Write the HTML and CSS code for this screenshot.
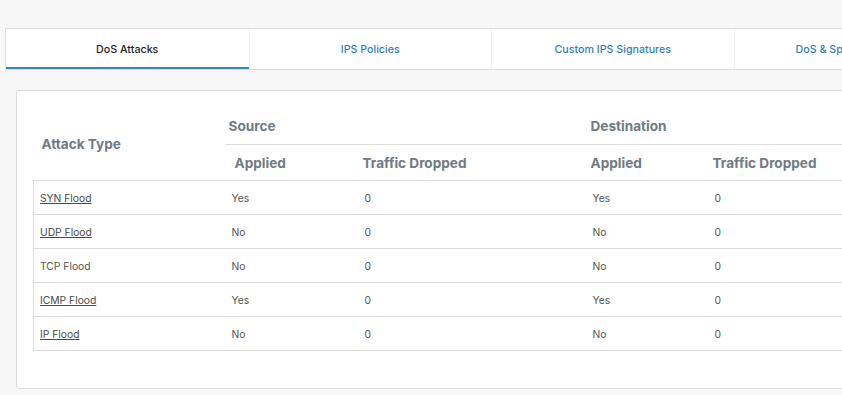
FILE: index.html
```html
<!DOCTYPE html>
<html>
<head>
<meta charset="utf-8">
<link rel="stylesheet" href="styles.css">
</head>
<body>
<div class="page">
  <nav class="tabs">
    <a class="tab active">DoS Attacks</a>
    <a class="tab">IPS Policies</a>
    <a class="tab">Custom IPS Signatures</a>
    <a class="tab">DoS &amp; Spoof Protection</a>
  </nav>
  <section class="card">
    <table class="grid">
      <colgroup>
        <col class="c1"><col class="c2"><col class="c3"><col class="c4"><col class="c5">
      </colgroup>
      <thead>
        <tr class="h1">
          <th rowspan="2" class="type">Attack Type</th>
          <th colspan="2" class="grp src">Source</th>
          <th colspan="2" class="grp dst">Destination</th>
        </tr>
        <tr class="h2">
          <th class="s-app">Applied</th>
          <th class="s-drop">Traffic Dropped</th>
          <th class="d-app">Applied</th>
          <th class="d-drop">Traffic Dropped</th>
        </tr>
      </thead>
      <tbody>
        <tr><td><a class="lnk">SYN Flood</a></td><td>Yes</td><td class="num">0</td><td class="dv">Yes</td><td class="num">0</td></tr>
        <tr><td><a class="lnk">UDP Flood</a></td><td>No</td><td class="num">0</td><td class="dv">No</td><td class="num">0</td></tr>
        <tr><td>TCP Flood</td><td>No</td><td class="num">0</td><td class="dv">No</td><td class="num">0</td></tr>
        <tr><td><a class="lnk">ICMP Flood</a></td><td>Yes</td><td class="num">0</td><td class="dv">Yes</td><td class="num">0</td></tr>
        <tr><td><a class="lnk">IP Flood</a></td><td>No</td><td class="num">0</td><td class="dv">No</td><td class="num">0</td></tr>
      </tbody>
    </table>
  </section>
</div>
</body>
</html>
```

FILE: styles.css
```css
html, body {
  margin: 0;
  padding: 0;
  background: #f7f7f7;
  overflow: hidden;
}
body {
  font-family: Inter, "Noto Sans", sans-serif;
  color: #555;
}
.page {
  width: 1000px;
  padding: 28px 0 0 5px;
}
.tabs {
  display: flex;
  width: 970px;
  background: #fff;
  border-top: 1px solid #dedede;
  border-left: 1px solid #dedede;
  border-bottom: 1px solid #dedede;
}
.tab {
  flex: 0 0 242.5px;
  box-sizing: border-box;
  height: 40px;
  display: flex;
  align-items: center;
  justify-content: center;
  font-size: 10.7px;
  font-weight: 500;
  color: #2f7fbd;
  border-left: 1px solid #f1f1f1;
  padding-top: 1px;
}
.tab:first-child { border-left: none; }
.tab.active {
  color: #1f1f1f;
  border-bottom: 2px solid #3d84b8;
  padding-top: 2px;
}
.card {
  margin: 20px 0 0 11px;
  width: 946px;
  background: #fff;
  border: 1px solid #dcdcdc;
  border-radius: 3px;
  padding: 17px 0 37px 16px;
}
.grid {
  border-collapse: collapse;
  width: 929px;
  table-layout: fixed;
}
.c1 { width: 192px; }
.c2 { width: 131px; }
.c3 { width: 228px; }
.c4 { width: 122px; }
th {
  text-align: left;
  font-size: 13.6px;
  font-weight: 700;
  color: #6f7a84;
  padding: 0 0 0 6px;
}
.h1 th { height: 36px; }
.h2 th { height: 35px; }
th.type { padding-left: 8px; }
th.grp { border-bottom: 1px solid #dcdcdc; }
th.src { padding-left: 3px; }
th.s-app { padding-left: 9px; }
thead tr.h2 th { border-bottom: 1px solid #dcdcdc; }
thead tr.h1 th.type { border-bottom: 1px solid #dcdcdc; }
tbody tr td:first-child { border-left: 1px solid #dcdcdc; }
td {
  height: 33px;
  font-size: 10.3px;
  color: #555;
  padding: 0 0 0 6px;
  border-bottom: 1px solid #dcdcdc;
}
td.num { padding-left: 8px; }
td.dv { padding-left: 8px; }
.lnk {
  color: #4a4a4a;
  text-decoration: underline;
}
```
